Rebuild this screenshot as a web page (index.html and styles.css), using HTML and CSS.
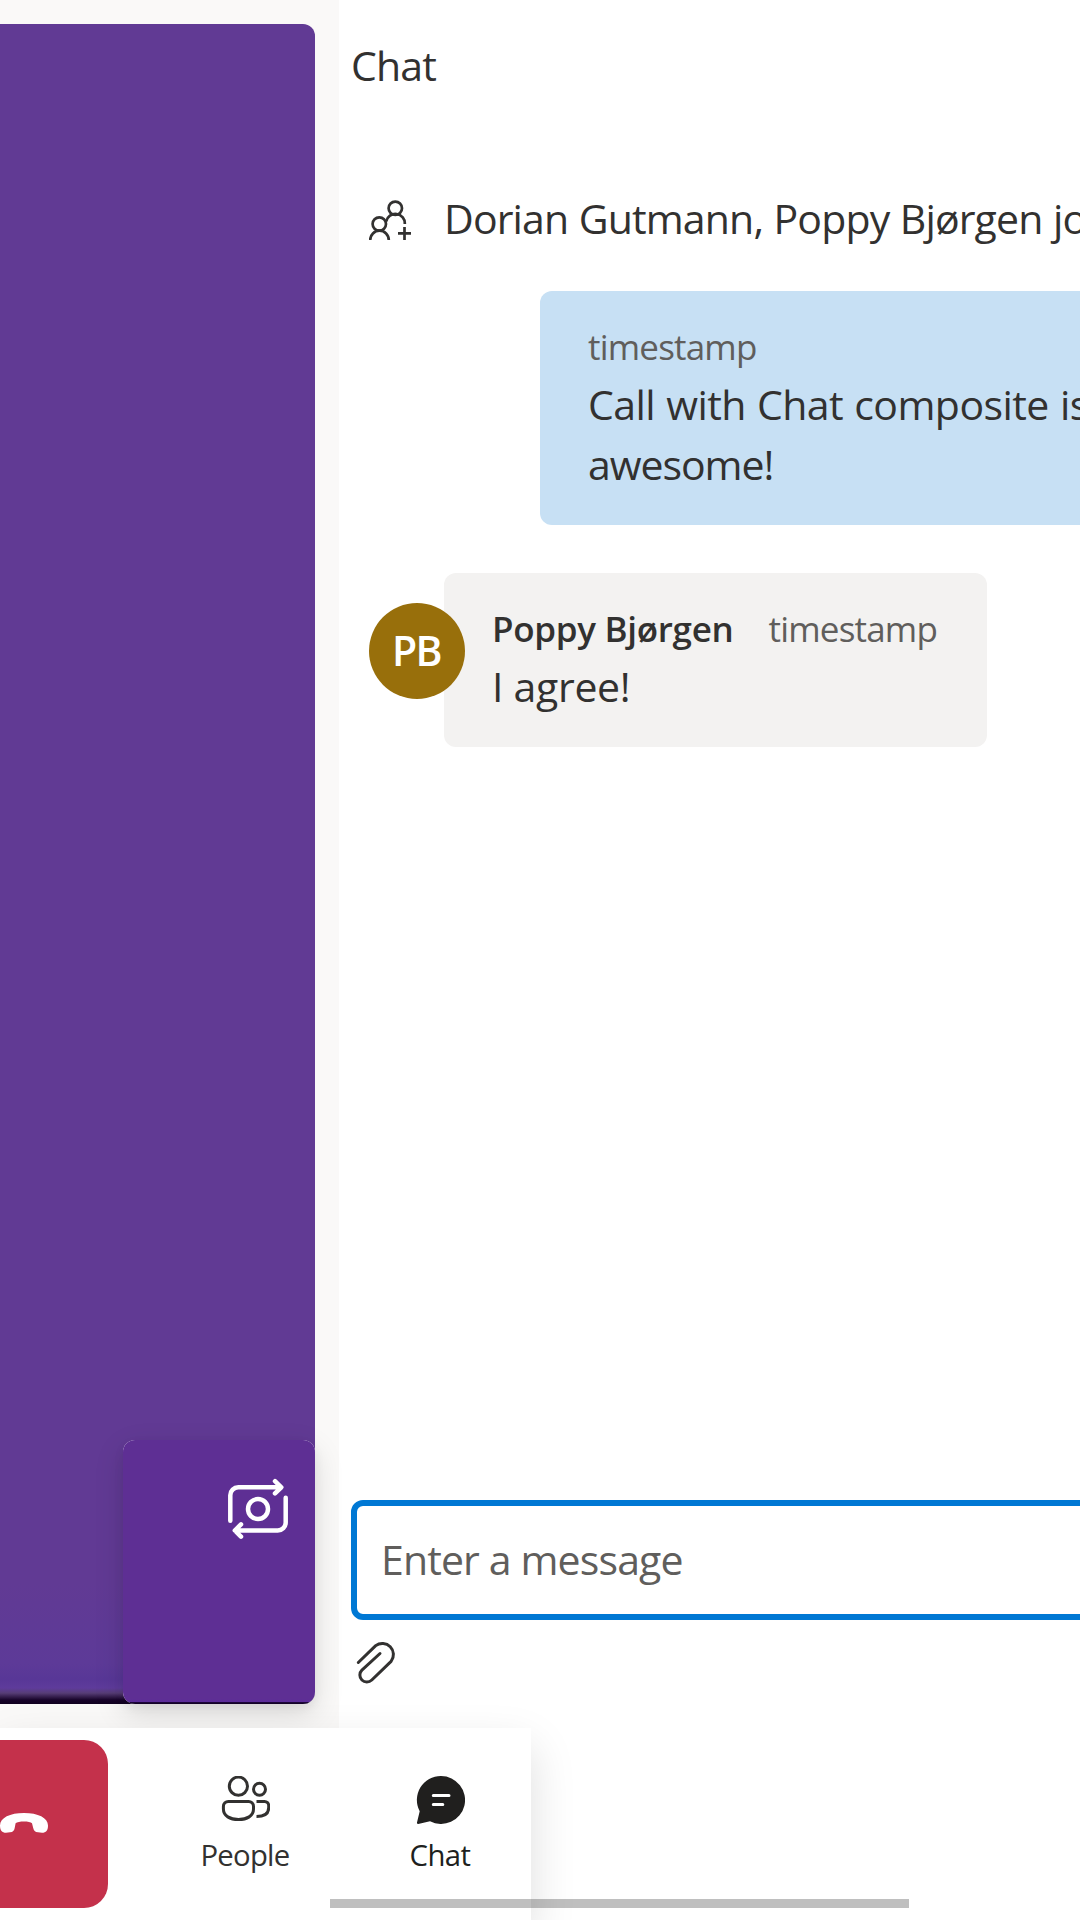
FILE: index.html
```html
<!DOCTYPE html>
<html lang="en">
<head>
<meta charset="utf-8">
<title>Call with chat</title>
<link rel="stylesheet" href="styles.css">
</head>
<body>
<main class="app">
  <section class="stage">
    <div class="video"></div>
    <div class="local">
      <div class="local-video">
        <svg class="switch-icon" viewBox="228 1478 60 62" width="60" height="62">
          <path d="M230.3 1520.7V1495.3A8 8 0 0 1 238.3 1487.3H281M275 1481.2L281.3 1487.3L275 1493.4M285.7 1497.7V1522.5A8 8 0 0 1 277.7 1530.5H235M241 1524.4L234.8 1530.5L241 1536.7"/>
          <circle cx="258" cy="1509" r="10"/>
        </svg>
      </div>
    </div>
  </section>

  <section class="chat">
    <h1 class="chat-title">Chat</h1>
    <div class="thread">
      <div class="system">
        <svg class="join-icon" viewBox="369 200 42 40" width="42" height="40">
          <circle cx="395.3" cy="208.3" r="6.7"/>
          <circle cx="379.3" cy="224" r="6.7"/>
          <path d="M370.2 240A9.3 9.3 0 0 1 388.8 240M386.2 221.5A9.4 9.4 0 0 1 404.8 224M404.5 227V240M398 233.4H411"/>
        </svg>
        <p class="body-text system-text">Dorian Gutmann, Poppy Bjørgen jo</p>
      </div>
      <article class="bubble mine">
        <header class="meta"><time class="time">timestamp</time></header>
        <p class="body-text"><span class="line-call">Call with Chat composite is</span><br><span class="line-awesome">awesome!</span></p>
      </article>
      <div class="incoming">
        <div class="avatar">PB</div>
        <article class="bubble theirs">
          <header class="meta"><span class="author">Poppy Bjørgen</span><time class="time">timestamp</time></header>
          <p class="body-text line-agree">I agree!</p>
        </article>
      </div>
    </div>
    <div class="composer">
      <div class="input">Enter a message</div>
      <svg class="clip-icon" viewBox="356 1640 40 44" width="40" height="44">
        <path d="M358.3 1662.5L375.7 1645.6A11.1 11.1 0 0 1 391.1 1661.3L371.8 1680A7 7 0 0 1 361.9 1670.1L380 1653.5"/>
      </svg>
    </div>
  </section>

  <nav class="toolbar">
    <div class="hangup">
      <svg viewBox="0 0 48 20" width="48" height="20"><path d="M24 0C10 0 0 4.8 0 12.5C0 17.3 2 19.8 6 19.8L10 19.3C13 19 14.2 17.8 14.7 15L15.6 10.3C18 8 30 8 32 10.3L33.2 15C33.8 17.8 35 19 38 19.3L42 19.8C46 19.8 48 17.3 48 12.5C48 4.8 38 0 24 0Z"/></svg>
    </div>
    <div class="item">
      <svg class="people-icon" viewBox="220 1776 50 48" width="50" height="48">
        <circle cx="238.4" cy="1786.2" r="9.1"/>
        <circle cx="259.5" cy="1789.3" r="6"/>
        <path d="M228.5 1801.4H248.5A5 5 0 0 1 253.5 1806.4V1809C253.5 1816 247 1819.5 238.5 1819.5C230 1819.5 223.4 1816 223.4 1809V1806.4A5 5 0 0 1 228.4 1801.4ZM256.5 1801.4H264.5A4.2 4.2 0 0 1 268.7 1805.6V1807.5C268.7 1813.5 264 1816.5 256.5 1816.5"/>
      </svg>
      <span class="label people-label">People</span>
    </div>
    <div class="item chat-item">
      <svg class="chat-icon" viewBox="415 1776 50 48" width="50" height="48">
        <path class="chat-shape" d="M441 1776A24 24 0 1 1 430 1821.3L418.2 1824Q416.8 1824 417 1822.6L419.7 1811.3A24 24 0 0 1 441 1776Z"/>
        <path class="chat-lines" d="M433.3 1795.5H449M433.3 1804.4H442.8"/>
      </svg>
      <span class="label chat-label">Chat</span>
    </div>
  </nav>
  <div class="scrollbar"></div>
</main>
</body>
</html>
```
FILE: styles.css
```css
* { box-sizing: border-box; margin: 0; padding: 0; }
body {
  font-family: "Open Sans", "Noto Sans", sans-serif;
  color: #323130;
  background: #fff;
}
.app {
  position: relative;
  display: grid;
  grid-template-columns: 339px 1fr;
  width: 1080px;
  height: 1920px;
  overflow: hidden;
}
svg { display: block; fill: none; stroke: #323130; stroke-width: 3; }

/* Video stage */
.stage { position: relative; background: #faf9f8; padding: 24px 24px 0 0; }
.video {
  height: 1680px;
  border-radius: 0 12px 12px 0;
  background: linear-gradient(#613a94 0, #613a94 1560px, #5d3a98 1640px, #583797 1655px, #5e3b9b 1664px, #573d76 1669px, #170329 1676px, #10001f 1680px);
}
.local {
  position: absolute;
  left: 123px;
  top: 1440px;
  width: 192px;
  height: 264px;
  border-radius: 12px;
  background: #fff;
  box-shadow: 0 10px 30px rgba(0, 0, 0, .13), 0 4px 11px rgba(0, 0, 0, .06);
}
.local-video {
  height: 100%;
  display: flex;
  justify-content: flex-end;
  padding: 38px 27px 0 0;
  border-radius: 12px;
  background: linear-gradient(#5e2f94 0, #5e2f94 259px, #5c2c9a 261.5px, #1c0638 262.5px, #10001f 264px);
}
.switch-icon { stroke: #fff; stroke-width: 4.5; stroke-linecap: round; stroke-linejoin: round; }

/* Chat pane */
.chat { display: flex; flex-direction: column; min-width: 0; padding-left: 12px; background: #fff; }
.chat-title {
  margin-top: 35px;
  font-size: 41px;
  line-height: 60px;
  font-weight: 400;
  letter-spacing: -.8px;
}
.thread { display: flex; flex-direction: column; height: 1405px; padding: 93px 0 0 18px; }
.system { display: flex; align-items: flex-start; gap: 33px; height: 60px; white-space: nowrap; }
.join-icon { flex: none; margin-top: 12px; stroke-width: 2.7; }
.body-text { font-size: 41px; line-height: 60px; letter-spacing: -.5px; }
.system-text { letter-spacing: -.85px; word-spacing: .6px; }
.line-call { letter-spacing: -.55px; word-spacing: 1px; white-space: nowrap; }
.line-awesome { letter-spacing: -1.05px; }
.line-agree { letter-spacing: -.3px; }
.bubble { padding: 32px 48px 30px; border-radius: 12px; }
.mine { width: 630px; height: 234px; margin: 43px 0 0 171px; background: #c7e0f4; }
.theirs { width: 543px; height: 174px; background: #f3f2f1; }
.meta { display: flex; gap: 35px; height: 48px; margin-bottom: 3px; font-size: 35px; line-height: 48px; }
.author { font-weight: 600; letter-spacing: -.3px; }
.time { color: #605e5c; letter-spacing: -.8px; }
.incoming { display: flex; align-items: flex-start; margin-top: 48px; }
.avatar {
  z-index: 1;
  flex: none;
  width: 96px;
  height: 96px;
  margin: 30px -21px 0 0;
  padding-right: 1px;
  border-radius: 50%;
  background: #986f0b;
  color: #fff;
  font-size: 41px;
  font-weight: 600;
  line-height: 95px;
  letter-spacing: -1.5px;
  text-align: center;
}
.input {
  width: 800px;
  height: 120px;
  padding: 0 24px;
  border: 6px solid #0078d4;
  border-radius: 12px;
  color: #605e5c;
  font-size: 41px;
  line-height: 106px;
  letter-spacing: -.86px;
}
.clip-icon { margin: 20px 0 0 5px; stroke-linecap: round; stroke-linejoin: round; }

/* Call controls float over both panes */
.toolbar {
  position: absolute;
  left: 0;
  top: 1728px;
  display: flex;
  width: 531px;
  height: 192px;
  background: #fff;
  box-shadow: 0 19px 43px rgba(0, 0, 0, .132);
}
.hangup {
  width: 108px;
  height: 168px;
  margin-top: 12px;
  padding-top: 73px;
  border-radius: 0 24px 24px 0;
  background: #c4314b;
}
.hangup svg { fill: #fff; stroke: none; }
.item { width: 100px; margin-left: 87px; padding-top: 48px; display: flex; flex-direction: column; align-items: center; }
.chat-item { margin-left: 95px; color: #201f1e; }
.chat-shape { fill: #201f1e; stroke: none; }
.chat-lines { stroke: #fff; stroke-width: 3; stroke-linecap: round; }
.label { margin-top: 11px; font-size: 29.3px; line-height: 40px; }
.people-label { letter-spacing: -.75px; }
.chat-label { letter-spacing: -.5px; }
.scrollbar { position: absolute; left: 330px; top: 1899px; width: 579px; height: 9px; background: rgba(0, 0, 0, .25); }
```
